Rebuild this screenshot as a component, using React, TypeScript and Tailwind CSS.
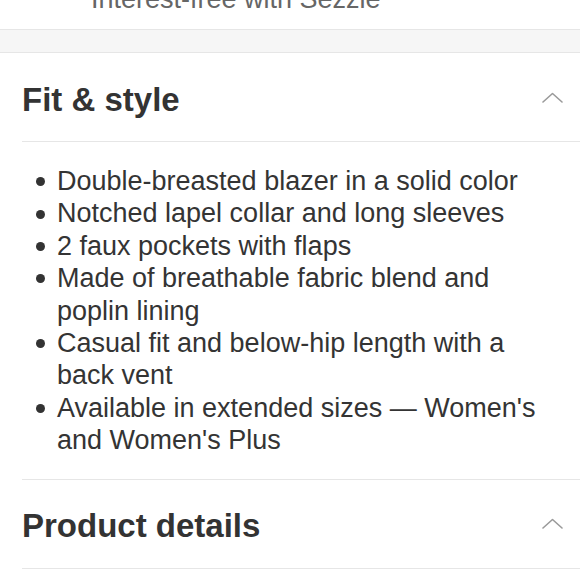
const fitStyle = [
  ["Double-breasted blazer in a solid color"],
  ["Notched lapel collar and long sleeves"],
  ["2 faux pockets with flaps"],
  ["Made of breathable fabric blend and poplin lining"],
  ["Casual fit and below-hip length with a back vent"],
  ["Available in extended sizes — Women's and Women's Plus"],
];

function Chevron() {
  return (
    <svg width="21" height="11" viewBox="0 0 21 11" fill="none" className="shrink-0">
      <path d="M1 10L10.5 1.5L20 10" stroke="#9a9a9a" strokeWidth="1.6" strokeLinecap="round" strokeLinejoin="round" />
    </svg>
  );
}

function SectionHeader({ title }: { title: string }) {
  return (
    <div className="flex h-[89px] items-center justify-between border-b border-[#e6e6e6] pr-[17px]">
      <h2 className="pt-[4px] text-[33px] font-bold leading-[37px] text-[#333333]">{title}</h2>
      <Chevron />
    </div>
  );
}

export default function App() {
  return (
    <div className="h-[580px] w-[580px] overflow-hidden bg-white font-['Liberation_Sans',Arial,sans-serif]">
      {/* Sezzle line, clipped at top */}
      <div className="h-[29px] overflow-hidden">
        <p className="-mt-[16px] pl-[91px] text-[27px] leading-[31px] text-[#666666]">
          Interest-free with Sezzle
        </p>
      </div>

      {/* Gray separator band */}
      <div className="h-[24px] border-y border-[#e6e6e6] bg-[#f6f6f6]" />

      <div className="ml-[22px]">
        <SectionHeader title="Fit & style" />

        <ul className="border-b border-[#e6e6e6] pb-[22px] pr-[30px] pt-[23px] text-[27px] leading-[32.4px] text-[#343434]">
          {fitStyle.map(([text]) => (
            <li key={text} className="flex">
              <span className="flex h-[32.4px] w-[35px] shrink-0 items-center pl-[14px] pt-[1px]">
                <span className="h-[9px] w-[9px] rounded-full bg-[#333333]" />
              </span>
              <span>{text}</span>
            </li>
          ))}
        </ul>

        <SectionHeader title="Product details" />
      </div>
    </div>
  );
}
